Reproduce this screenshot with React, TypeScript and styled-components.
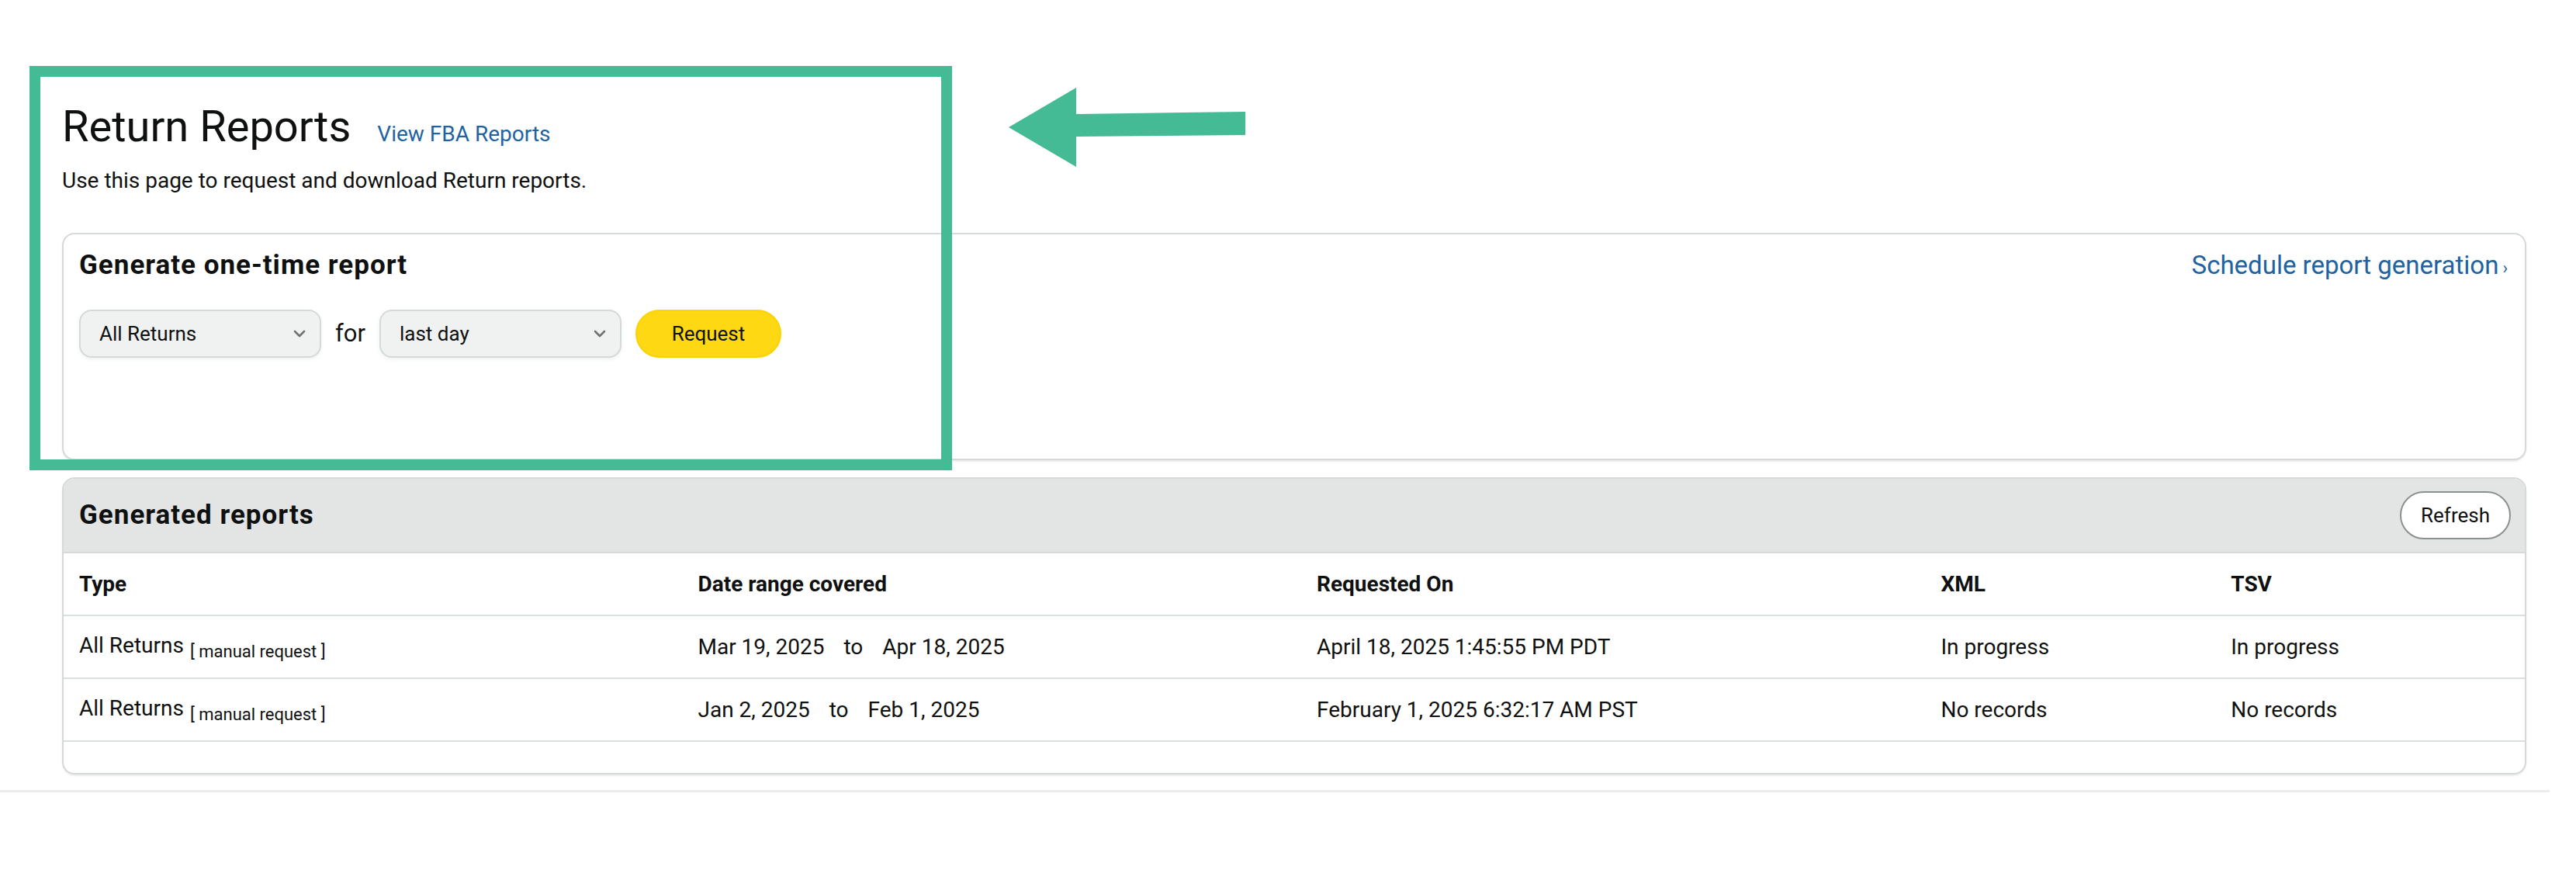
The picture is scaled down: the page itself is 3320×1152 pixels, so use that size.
import React from 'react';
import styled, { createGlobalStyle } from 'styled-components';

const GlobalStyle = createGlobalStyle`
  html, body { margin: 0; padding: 0; background: #ffffff; }
  body {
    font-family: Roboto, "Liberation Sans", Arial, sans-serif;
    color: #0f1111;
  }
  * { box-sizing: border-box; }
`;

const Page = styled.div`
  position: relative;
  width: 3320px;
  min-height: 1152px;
  background: #ffffff;
`;

const Content = styled.main`
  padding: 127px 64px 0 80px;
`;

const TitleRow = styled.div`
  display: flex;
  align-items: baseline;
  gap: 34px;
`;

const Title = styled.h1`
  margin: 0;
  font-size: 56px;
  line-height: 72px;
  font-weight: 400;
  color: #0f1111;
`;

const TextLink = styled.a<{ $size: number }>`
  font-size: ${(p) => p.$size}px;
  color: #2162a1;
  text-decoration: none;
  cursor: pointer;
`;

const Chevron = styled.span`
  font-size: 22px;
  margin-left: 5px;
`;

const Description = styled.p`
  margin: 14px 0 0;
  font-size: 28px;
  line-height: 40px;
`;

const Card = styled.section`
  border: 2px solid #d5d9d9;
  border-radius: 16px;
  background: #ffffff;
  overflow: hidden;
  box-shadow: 0 2px 2px rgba(15, 17, 17, 0.08);
`;

const GenerateCard = styled(Card)`
  margin-top: 47px;
  padding: 18px 22px 130px 20px;
`;

const CardHeader = styled.div`
  display: flex;
  justify-content: space-between;
  align-items: baseline;
`;

const CardTitle = styled.h3`
  margin: 0;
  font-size: 35px;
  line-height: 44px;
  font-weight: 700;
  letter-spacing: 1px;
`;

const Controls = styled.div`
  margin-top: 35px;
  display: flex;
  align-items: center;
  gap: 18px;
`;

const Select = styled.div`
  width: 312px;
  height: 62px;
  display: flex;
  align-items: center;
  justify-content: space-between;
  padding: 0 18px 0 24px;
  background: #f0f2f2;
  border: 2px solid #d5d9d9;
  border-radius: 16px;
  font-size: 26px;
  color: #0f1111;
  box-shadow: 0 2px 5px rgba(213, 217, 217, 0.4);
`;

const ForLabel = styled.span`
  font-size: 31px;
  line-height: 40px;
`;

const RequestButton = styled.button`
  width: 188px;
  height: 62px;
  border: 2px solid #fcd200;
  background: #ffd814;
  border-radius: 40px;
  font-family: inherit;
  font-size: 26px;
  color: #0f1111;
  cursor: pointer;
`;

const ReportsCard = styled(Card)`
  margin-top: 22px;
  padding-bottom: 40px;
`;

const ReportsHeader = styled.div`
  display: flex;
  justify-content: space-between;
  align-items: center;
  padding: 16px 18px 16px 20px;
  background: #e3e4e4;
  border-bottom: 2px solid #d5d9d9;
`;

const RefreshButton = styled.button`
  height: 62px;
  padding: 0 25px;
  background: #ffffff;
  border: 2px solid #8d9090;
  border-radius: 40px;
  font-family: inherit;
  font-size: 26px;
  color: #0f1111;
  cursor: pointer;
`;

const TableRow = styled.div<{ $head?: boolean }>`
  display: grid;
  grid-template-columns: 798fr 798fr 805fr 374fr 399fr;
  height: 81px;
  align-items: center;
  border-bottom: 2px solid #dcdfdf;
  font-weight: ${(p) => (p.$head ? 700 : 400)};
`;

const Cell = styled.div`
  padding: 0 20px;
  font-size: 28px;
  white-space: nowrap;
`;

const Note = styled.span`
  font-size: 22px;
  margin-left: 8px;
  vertical-align: -6px;
`;

const RangeTo = styled.span`
  padding: 0 25px;
`;

const Rule = styled.div`
  margin-top: 20px;
  width: calc(100% - 34px);
  height: 3px;
  background: #ececec;
`;

const HighlightBox = styled.div`
  position: absolute;
  left: 38px;
  top: 85px;
  width: 1189px;
  height: 521px;
  border: 14px solid #44ba95;
  pointer-events: none;
`;

const Arrow = styled.svg`
  position: absolute;
  left: 1300px;
  top: 113px;
  width: 305px;
  height: 102px;
  pointer-events: none;
`;

const ChevronDown = () => (
  <svg width="16" height="10" viewBox="0 0 16 10" aria-hidden="true">
    <polyline points="2,2 8,8 14,2" fill="none" stroke="#6f7373" strokeWidth="2.6" strokeLinecap="round" strokeLinejoin="round" />
  </svg>
);

type Row = {
  type: string;
  from: string;
  to: string;
  requested: string;
  xml: string;
  tsv: string;
};

const rows: Row[] = [
  {
    type: 'All Returns',
    from: 'Mar 19, 2025',
    to: 'Apr 18, 2025',
    requested: 'April 18, 2025 1:45:55 PM PDT',
    xml: 'In progress',
    tsv: 'In progress',
  },
  {
    type: 'All Returns',
    from: 'Jan 2, 2025',
    to: 'Feb 1, 2025',
    requested: 'February 1, 2025 6:32:17 AM PST',
    xml: 'No records',
    tsv: 'No records',
  },
];

export default function App() {
  return (
    <Page>
      <GlobalStyle />
      <Content>
        <TitleRow>
          <Title>Return Reports</Title>
          <TextLink $size={28}>View FBA Reports</TextLink>
        </TitleRow>
        <Description>Use this page to request and download Return reports.</Description>

        <GenerateCard>
          <CardHeader>
            <CardTitle>Generate one-time report</CardTitle>
            <TextLink $size={33}>
              Schedule report generation<Chevron>›</Chevron>
            </TextLink>
          </CardHeader>
          <Controls>
            <Select>
              <span>All Returns</span>
              <ChevronDown />
            </Select>
            <ForLabel>for</ForLabel>
            <Select>
              <span>last day</span>
              <ChevronDown />
            </Select>
            <RequestButton>Request</RequestButton>
          </Controls>
        </GenerateCard>

        <ReportsCard>
          <ReportsHeader>
            <CardTitle>Generated reports</CardTitle>
            <RefreshButton>Refresh</RefreshButton>
          </ReportsHeader>
          <TableRow $head>
            <Cell>Type</Cell>
            <Cell>Date range covered</Cell>
            <Cell>Requested On</Cell>
            <Cell>XML</Cell>
            <Cell>TSV</Cell>
          </TableRow>
          {rows.map((r, i) => (
            <TableRow key={i}>
              <Cell>
                {r.type}
                <Note>[ manual request ]</Note>
              </Cell>
              <Cell>
                {r.from}
                <RangeTo>to</RangeTo>
                {r.to}
              </Cell>
              <Cell>{r.requested}</Cell>
              <Cell>{r.xml}</Cell>
              <Cell>{r.tsv}</Cell>
            </TableRow>
          ))}
        </ReportsCard>
      </Content>
      <Rule />

      <HighlightBox />
      <Arrow viewBox="0 0 305 102" aria-hidden="true">
        <polygon points="0,51 87,0 87,34 305,31 305,61 87,63 87,102" fill="#44ba95" />
      </Arrow>
    </Page>
  );
}
